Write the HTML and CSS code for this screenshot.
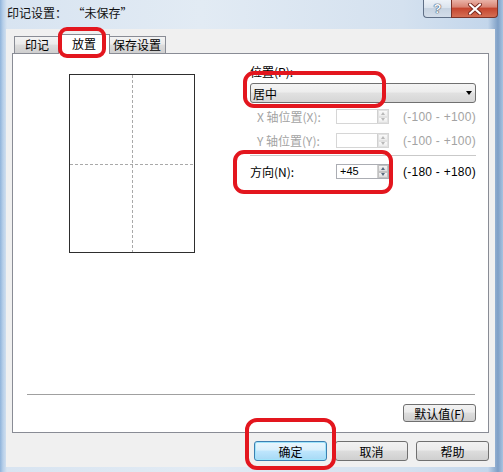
FILE: index.html
```html
<!DOCTYPE html>
<html lang="zh-CN">
<head>
<meta charset="utf-8">
<title>印记设置</title>
<link rel="stylesheet" href="styles.css">
</head>
<body>
<div class="window">
  <div class="titlebar">
    <span class="title">印记设置：  “未保存”</span>
    <div class="caption-btns">
      <div class="cbtn help">?</div>
      <div class="cbtn close">
        <svg width="16" height="12" viewBox="0 0 16 12">
          <path d="M3 1.5 L13 10.5 M13 1.5 L3 10.5" stroke="#7a2a20" stroke-width="4" stroke-linecap="round"/>
          <path d="M3 1.5 L13 10.5 M13 1.5 L3 10.5" stroke="#ffffff" stroke-width="2.2" stroke-linecap="round"/>
        </svg>
      </div>
    </div>
  </div>
  <div class="client">
    <div class="tabs">
      <div class="tab t1">印记</div>
      <div class="tab t2 sel">放置</div>
      <div class="tab t3">保存设置</div>
    </div>
    <div class="panel">
      <div class="panel-main">
        <div class="preview"></div>
        <div class="form">
          <div class="lbl">位置(P):</div>
          <div class="combo"><span>居中</span><span class="arrow"></span></div>
          <div class="row disabled r-x">
            <span class="rlabel indent">X 轴位置(X):</span>
            <div class="spin"><span class="val"></span><div class="spinbtns"><span class="sb up"></span><span class="sb down"></span></div></div>
            <span class="range">(-100 - +100)</span>
          </div>
          <div class="row disabled r-y">
            <span class="rlabel indent">Y 轴位置(Y):</span>
            <div class="spin"><span class="val"></span><div class="spinbtns"><span class="sb up"></span><span class="sb down"></span></div></div>
            <span class="range">(-100 - +100)</span>
          </div>
          <div class="fsep"></div>
          <div class="row r-dir">
            <span class="rlabel">方向(N):</span>
            <div class="spin"><span class="val">+45</span><div class="spinbtns"><span class="sb up"></span><span class="sb down"></span></div></div>
            <span class="range">(-180 - +180)</span>
          </div>
        </div>
      </div>
      <div class="sep"></div>
      <div class="defrow"><button class="btn small">默认值(F)</button></div>
    </div>
    <div class="buttons">
      <button class="btn primary">确定</button>
      <button class="btn">取消</button>
      <button class="btn">帮助</button>
    </div>
  </div>

  <div class="ring ring-tab"></div>
  <div class="ring ring-combo"></div>
  <div class="ring ring-dir"></div>
  <div class="ring ring-ok"></div>
</div>
</body>
</html>
```

FILE: styles.css
```css
* { box-sizing: border-box; }
html, body { margin: 0; padding: 0; }
body {
  width: 503px;
  height: 472px;
  overflow: hidden;
  font-family: "Noto Sans CJK SC", "Noto Sans", sans-serif;
  font-size: 12px;
  color: #000;
  background: #b9d1ea;
}
.window {
  position: relative;
  width: 503px;
  height: 472px;
  display: flex;
  flex-direction: column;
  background:
    linear-gradient(to right, #8fb3da 0, #b7cfe9 3px, #d8e4f1 7px, #e2ebf4 40%, #d4e1ef 80%, #c3d6eb 97%, #7e9fc6 99%, #a9c3e0 100%);
}
.titlebar {
  height: 29px;
  display: flex;
  justify-content: space-between;
  align-items: flex-start;
  padding-left: 7px;
}
.title { line-height: 26px; white-space: pre; color: #111; }
.caption-btns { display: flex; margin-right: 5px; }
.cbtn {
  height: 18px;
  border: 1px solid #5f6f86;
  border-top: 0;
  display: flex;
  align-items: center;
  justify-content: center;
}
.help {
  width: 28px;
  border-right: 0;
  border-radius: 0 0 0 4px;
  background: linear-gradient(#edf2f8, #dbe4ee 45%, #c7d3e1 50%, #d3dde9);
  font-family: "Liberation Sans", sans-serif;
  font-weight: bold;
  font-size: 13px;
  color: #f7f9fb;
  text-shadow: 0 0 1px #3c4f68, 0 0 1px #3c4f68, 0 0 1px #3c4f68;
}
.close {
  width: 47px;
  border-radius: 0 0 4px 0;
  border-color: #7b3328;
  background: linear-gradient(#eab3a7, #d98574 40%, #c5462f 50%, #d56f55);
}
.client {
  flex: 1;
  margin: 0 8px 5px 6px;
  background: #f0f0f0;
  padding: 5px 6px 6px;
  display: flex;
  flex-direction: column;
}
.tabs {
  display: flex;
  align-items: flex-end;
  height: 19px;
  padding-left: 2px;
  position: relative;
  z-index: 1;
}
.tab {
  height: 17px;
  border: 1px solid #898c95;
  border-bottom: 0;
  background: linear-gradient(#f3f3f3, #ebebeb 45%, #dddddd 50%, #cfcfcf);
  text-align: center;
  line-height: 15px;
}
.t1 { width: 46px; }
.t2 { width: 48px; }
.t3 { width: 58px; }
.tab.sel {
  width: 52px;
  height: 20px;
  margin: 0 -2px -1px;
  background: #fff;
  position: relative;
  z-index: 2;
  line-height: 17px;
}
.panel {
  height: 380px;
  border: 1px solid #898c95;
  background: #fff;
  display: flex;
  flex-direction: column;
}
.panel-main { flex: 1; display: flex; }
.preview {
  margin: 20px 0 0 56px;
  width: 126px;
  height: 179px;
  border: 1px solid #2e2e2e;
  background:
    repeating-linear-gradient(to bottom, #a9a9a9 0 3px, transparent 3px 5px) 62px 0 / 1px 100% no-repeat,
    repeating-linear-gradient(to right, #a9a9a9 0 3px, transparent 3px 5px) 0 89px / 100% 1px no-repeat,
    #fff;
}
.form { margin: 10px 0 0 55px; width: 226px; }
.lbl { height: 16px; line-height: 16px; }
.combo {
  height: 20px;
  margin-top: 3px;
  border: 1px solid #707070;
  border-radius: 3px;
  background: linear-gradient(#f4f4f4, #ededed 45%, #e1e1e1 50%, #d6d6d6);
  display: flex;
  align-items: center;
  justify-content: space-between;
  padding: 0 3px 0 2px;
}
.arrow {
  width: 0;
  height: 0;
  border-top: 4px solid #000;
  border-left: 3.5px solid transparent;
  border-right: 3.5px solid transparent;
}
.row { display: flex; align-items: center; height: 15px; }
.r-x { margin-top: 6px; }
.r-y { margin-top: 9px; }
.r-dir { margin-top: 8px; }
.fsep { margin-top: 7px; border-top: 1px solid #c9c9c9; }
.rlabel { width: 86px; white-space: pre; line-height: 15px; }
.rlabel.indent { padding-left: 7px; }
.disabled .rlabel, .disabled .range { color: #a3a3a3; }
.spin {
  width: 53px;
  height: 15px;
  border: 1px solid #abadb3;
  background: #fff;
  display: flex;
  justify-content: space-between;
}
.disabled .spin { border-color: #d6d6d6; }
.val {
  font-family: "Liberation Sans", sans-serif;
  font-size: 11px;
  line-height: 13px;
  padding-left: 3px;
}
.spinbtns { width: 11px; display: flex; flex-direction: column; border-left: 1px solid #d0d0d0; }
.sb {
  flex: 1;
  display: flex;
  align-items: center;
  justify-content: center;
  background: linear-gradient(#f5f5f5, #dcdcdc);
  border: 1px solid #c2c2c2;
}
.sb.up::before {
  content: "";
  border-bottom: 3px solid #5b6b80;
  border-left: 2.5px solid transparent;
  border-right: 2.5px solid transparent;
}
.sb.down::before {
  content: "";
  border-top: 3px solid #5b6b80;
  border-left: 2.5px solid transparent;
  border-right: 2.5px solid transparent;
}
.disabled .sb { border-color: #e2e2e2; background: linear-gradient(#fafafa, #ececec); }
.disabled .sb.up::before { border-bottom-color: #b8b8b8; }
.disabled .sb.down::before { border-top-color: #b8b8b8; }
.range {
  margin-left: 14px;
  font-family: "Liberation Sans", sans-serif;
  font-size: 12px;
  letter-spacing: 0.25px;
  white-space: pre;
}
.sep { margin: 0 13px 0 14px; border-top: 1px solid #a0a0a0; }
.defrow { display: flex; justify-content: flex-end; padding: 9px 12px 10px 0; }
.btn {
  font: inherit;
  color: #000;
  height: 20px;
  width: 73px;
  padding: 0;
  border: 1px solid #707070;
  border-radius: 3px;
  background: linear-gradient(#f2f2f2, #ebebeb 45%, #dddddd 50%, #cfcfcf);
  line-height: 17px;
}
.btn.small { height: 18px; line-height: 15px; }
.btn.primary {
  border-color: #3c7fb1;
  background: linear-gradient(#eaf6fd, #d9f0fc 45%, #bee6fd 50%, #a7d9f5);
  box-shadow: inset 0 0 0 1px #9fe4fb;
}
.buttons { display: flex; justify-content: flex-end; gap: 8px; margin-top: 8px; }
.ring {
  position: absolute;
  border: 4px solid #e3161e;
  border-radius: 9px;
  z-index: 10;
}
.ring-tab { left: 58px; top: 27px; width: 48px; height: 31px; }
.ring-combo { left: 243px; top: 71px; width: 143px; height: 37px; border-radius: 11px; }
.ring-dir { left: 233px; top: 150px; width: 160px; height: 44px; border-radius: 11px; }
.ring-ok { left: 245px; top: 418px; width: 91px; height: 52px; border-radius: 12px; }
```
